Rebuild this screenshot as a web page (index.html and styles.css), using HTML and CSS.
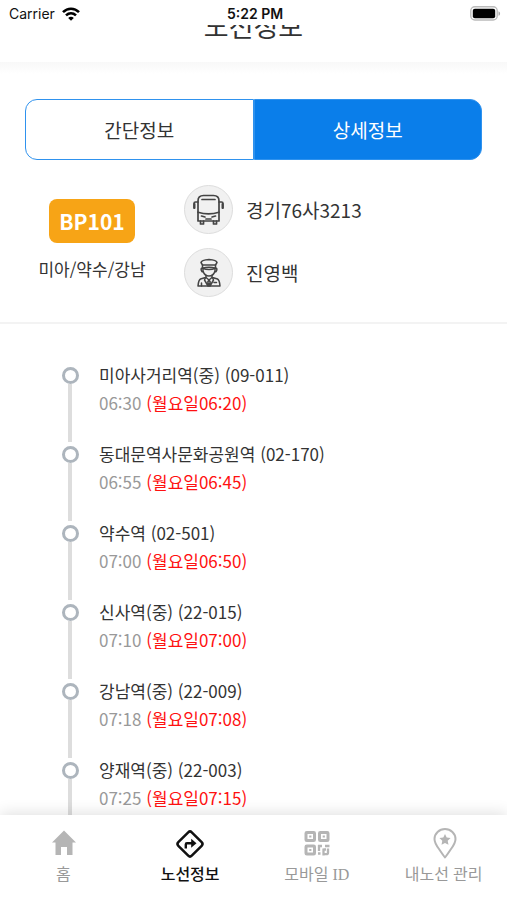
FILE: index.html
```html
<!DOCTYPE html>
<html lang="ko">
<head>
<meta charset="utf-8">
<meta name="viewport" content="width=device-width, initial-scale=1">
<title>노선정보</title>
<link rel="stylesheet" href="styles.css">
</head>
<body>
<div class="app">
  <div class="status">
    <div class="carrier">
      <span>Carrier</span>
      <svg width="18" height="14" viewBox="0 0 18 14" aria-hidden="true">
        <g fill="none" stroke="#000" stroke-width="2.6">
          <path d="M1 5.2C5.6 .6 12.4 .6 17 5.2"/>
          <path d="M4 8.4C7 5.6 11 5.6 14 8.4"/>
        </g>
        <path d="M6.2 10.9C7.8 9.5 10.2 9.5 11.8 10.9L9 13.8Z"/>
      </svg>
    </div>
    <div class="clock">5:22 PM</div>
    <div class="battery">
      <svg width="31" height="15" viewBox="0 0 31 15" aria-hidden="true">
        <rect x=".8" y=".8" width="26.4" height="13.2" rx="4" fill="#fff" stroke="#bbb" stroke-width="1.4"/>
        <rect x="2.8" y="2.8" width="22.4" height="9.4" rx="2"/>
        <path d="M28.5 5.2C30.6 6 30.6 9 28.5 9.8Z" fill="#aaa"/>
      </svg>
    </div>
  </div>

  <main class="content">
    <header class="header"><h1>노선정보</h1></header>

    <div class="tabs">
      <button class="tab" type="button">간단정보</button>
      <button class="tab selected" type="button">상세정보</button>
    </div>

    <section class="summary">
      <div class="route">
        <strong class="badge">BP101</strong>
        <span class="via">미아/약수/강남</span>
      </div>
      <div class="details">
        <div class="detail">
          <span class="avatar">
            <svg width="32" height="32" viewBox="0 0 32 32" fill="none" stroke="#444" stroke-width="1.7" stroke-linejoin="round" stroke-linecap="round" aria-hidden="true">
              <path d="M5 27V7Q5 1.500 10.500 1.500H20.500Q26 1.500 26 7V27Z"/>
              <path d="M9 5.500H22M5 18.200Q15.500 21.500 26 18.200M5 8H2.500Q1 8 1 9.500V14M26 8H28.500Q30 8 30 9.500V14M8.500 22L12 23M22.500 22L19 23M13 25H18"/>
              <path d="M7.500 27V30H10.500V27M20.500 27V30H23.500V27"/>
              <path d="M1.500 10V14M29.500 10V14" stroke-width="2"/>
            </svg>
          </span>
          <span>경기76사3213</span>
        </div>
        <div class="detail">
          <span class="avatar">
            <svg width="32" height="32" viewBox="0 0 32 32" fill="none" stroke="#444" stroke-width="1.5" stroke-linejoin="round" stroke-linecap="round" aria-hidden="true">
              <path d="M9.500 8L8 5.500Q8.500 3 16 2.500Q23.500 3 24 5.500L22.500 8Z"/>
              <path d="M9.500 8V11.200Q16 9.500 22.500 11.200V8"/>
              <path d="M9.500 11.200Q16 13.800 22.500 11.200M9.500 11Q7.800 11 8.200 13Q8.600 15 10.300 15M22.500 11Q24.200 11 23.800 13Q23.400 15 21.700 15"/>
              <path d="M10 12V14Q11.500 19 16 19Q20.500 19 22 14V12"/>
              <path d="M13 18.500V20.500L16 23L19 20.500V18.500M12.500 20.500L7.500 22Q5.500 23 5 29H27Q26.500 23 24.500 22L19.500 20.500"/>
              <path d="M12.500 20.500L11.500 23L15 29M19.500 20.500L20.500 23L17 29M16 23L14.800 25L16 29L17.200 25ZM8.500 26V29M21 25.500H23.500"/>
            </svg>
          </span>
          <span>진영백</span>
        </div>
      </div>
    </section>

    <ol class="stops">
      <li class="stop"><h2>미아사거리역(중) (09-011)</h2><p>06:30 <em>(월요일06:20)</em></p></li>
      <li class="stop"><h2>동대문역사문화공원역 (02-170)</h2><p>06:55 <em>(월요일06:45)</em></p></li>
      <li class="stop"><h2>약수역 (02-501)</h2><p>07:00 <em>(월요일06:50)</em></p></li>
      <li class="stop"><h2>신사역(중) (22-015)</h2><p>07:10 <em>(월요일07:00)</em></p></li>
      <li class="stop"><h2>강남역(중) (22-009)</h2><p>07:18 <em>(월요일07:08)</em></p></li>
      <li class="stop"><h2>양재역(중) (22-003)</h2><p>07:25 <em>(월요일07:15)</em></p></li>
    </ol>
  </main>

  <nav class="nav">
    <a href="#home">
      <svg width="32" height="32" viewBox="0 0 32 32" fill="#b5b5b5" aria-hidden="true">
        <path d="M17 2.500L29 14.500H25.500V27H20V19H14V27H8.500V14.500H5Z"/>
      </svg>
      <span>홈</span>
    </a>
    <a href="#routes" class="current" aria-current="page">
      <svg width="32" height="32" viewBox="0 0 32 32" fill="none" aria-hidden="true">
        <rect x="6.500" y="6.500" width="19" height="19" rx="2.500" transform="rotate(45 16 16)" stroke="#111" stroke-width="2.500"/>
        <path d="M11.800 20.500V16.500Q11.800 15.300 13 15.300H18" stroke="#111" stroke-width="2.400"/>
        <path d="M17.200 10.800L22.500 15.300L17.200 19.800Z" fill="#111"/>
      </svg>
      <span>노선정보</span>
    </a>
    <a href="#mobile-id">
      <svg width="32" height="32" viewBox="0 0 32 32" fill="none" stroke="#b5b5b5" stroke-width="3" aria-hidden="true">
        <rect x="5" y="4.500" width="8.500" height="8" rx=".8"/>
        <rect x="18.500" y="4.500" width="8.500" height="8" rx=".8"/>
        <rect x="5" y="18" width="8.500" height="8" rx=".8"/>
        <path d="M8.200 8.500H10.400M21.700 8.500H23.900M8.200 22H10.400" stroke-width="2"/>
        <path d="M17 18H21M18 17V23M24 18H28.500M27 20.500V24.500Q27 26.200 25.300 26.200H23.500M22.500 21.500H25M22.500 20.500V27.500M17 25.500H19.500" stroke-width="2.300"/>
      </svg>
      <span>모바일 ID</span>
    </a>
    <a href="#my-routes">
      <svg width="32" height="32" viewBox="0 0 32 32" fill="none" aria-hidden="true">
        <path d="M17 29.500Q15 27 11 21Q6.500 15 6.500 11A10.500 10 0 0 1 27.500 11Q27.500 15 23 21Q19 27 17 29.500Z" stroke="#b5b5b5" stroke-width="2" stroke-linejoin="round"/>
        <path d="M17 6L18.700 9.600L22.600 10.100L19.700 12.700L20.500 16.800L17 14.900L13.500 16.800L14.300 12.700L11.400 10.100L15.300 9.600Z" fill="#b5b5b5"/>
      </svg>
      <span>내노선 관리</span>
    </a>
  </nav>
</div>
</body>
</html>
```

FILE: styles.css
```css
*,
*::before,
*::after {
  box-sizing: border-box;
}

body {
  margin: 0;
  background: #fff;
  color: #333;
  font-family: "Noto Sans CJK KR", sans-serif;
}

h1,
h2,
p,
ol {
  margin: 0;
  padding: 0;
  font-weight: 400;
}

.app {
  display: flex;
  flex-direction: column;
  height: 100vh;
}

.status {
  display: grid;
  grid-template-columns: 1fr auto 1fr;
  align-items: center;
  height: 25px;
  padding: 2px 6px 0 9px;
  color: #111;
  font-family: Inter, sans-serif;
  font-size: 14px;
  line-height: 20px;
}

.carrier {
  display: flex;
  align-items: center;
  gap: 7px;
}

.clock {
  font-weight: 600;
}

.battery {
  display: flex;
  justify-content: flex-end;
}

.content {
  flex: 1;
  min-height: 0;
  overflow-y: auto;
  scrollbar-width: none;
}

.header {
  display: flex;
  align-items: flex-end;
  justify-content: center;
  height: 37px;
  padding-bottom: 16px;
  overflow: hidden;
  background: #fff;
}

.header h1 {
  font-size: 27px;
  line-height: 40px;
}

.tabs {
  display: flex;
  padding: 37px 25px 25px;
  background: linear-gradient(#f8f8f8, #fff 12px);
}

.tab {
  flex: 1;
  height: 61px;
  padding: 0;
  border: 1px solid #2f92ee;
  border-radius: 12px 0 0 12px;
  background: #fff;
  color: #333;
  font: inherit;
  font-size: 19px;
}

.tab.selected {
  border-radius: 0 12px 12px 0;
  background: #0a7eea;
  color: #fff;
}

.summary {
  display: flex;
  padding-bottom: 25px;
  border-bottom: 2px solid #f3f3f3;
}

.route {
  display: flex;
  flex-direction: column;
  align-items: center;
  width: 184px;
  padding-top: 14px;
  gap: 14px;
}

.badge {
  padding: 0 10px;
  border-radius: 8px;
  background: #f7a416;
  color: #fff;
  font-size: 21px;
  line-height: 44px;
}

.via {
  font-size: 17px;
  line-height: 24px;
}

.details {
  display: grid;
  gap: 14px;
}

.detail {
  display: flex;
  align-items: center;
  gap: 13px;
  font-size: 19px;
}

.avatar {
  display: grid;
  place-items: center;
  width: 49px;
  height: 49px;
  border: 1px solid #ddd;
  border-radius: 50%;
  background: #f1f1f1;
}

.stops {
  padding: 37px 24px 0 62px;
  list-style: none;
}

.stop {
  position: relative;
  height: 79px;
  padding-left: 37px;
}

.stop::before {
  content: "";
  position: absolute;
  top: 6px;
  left: 0;
  width: 17px;
  height: 17px;
  border: 3px solid #adb5bd;
  border-radius: 50%;
}

.stop::after {
  content: "";
  position: absolute;
  top: 23px;
  left: 6px;
  width: 4px;
  height: 58px;
  background: #ddd;
}

.stop h2,
.stop p {
  font-size: 17px;
  line-height: 28px;
}

.stop p {
  color: #999;
}

.stop em {
  color: #f11;
  font-style: normal;
}

.nav {
  position: relative;
  display: grid;
  grid-template-columns: repeat(4, 1fr);
  height: 85px;
  padding-top: 13px;
  background: #fff;
  box-shadow: 0 -2px 14px rgba(0, 0, 0, 0.12);
}

.nav a {
  display: flex;
  flex-direction: column;
  align-items: center;
  gap: 3px;
  color: #999;
  font-family: "Liberation Serif", "Noto Sans CJK KR", serif;
  font-size: 16px;
  line-height: 24px;
  text-decoration: none;
}

.nav .current {
  color: #111;
  font-weight: 500;
}
```
